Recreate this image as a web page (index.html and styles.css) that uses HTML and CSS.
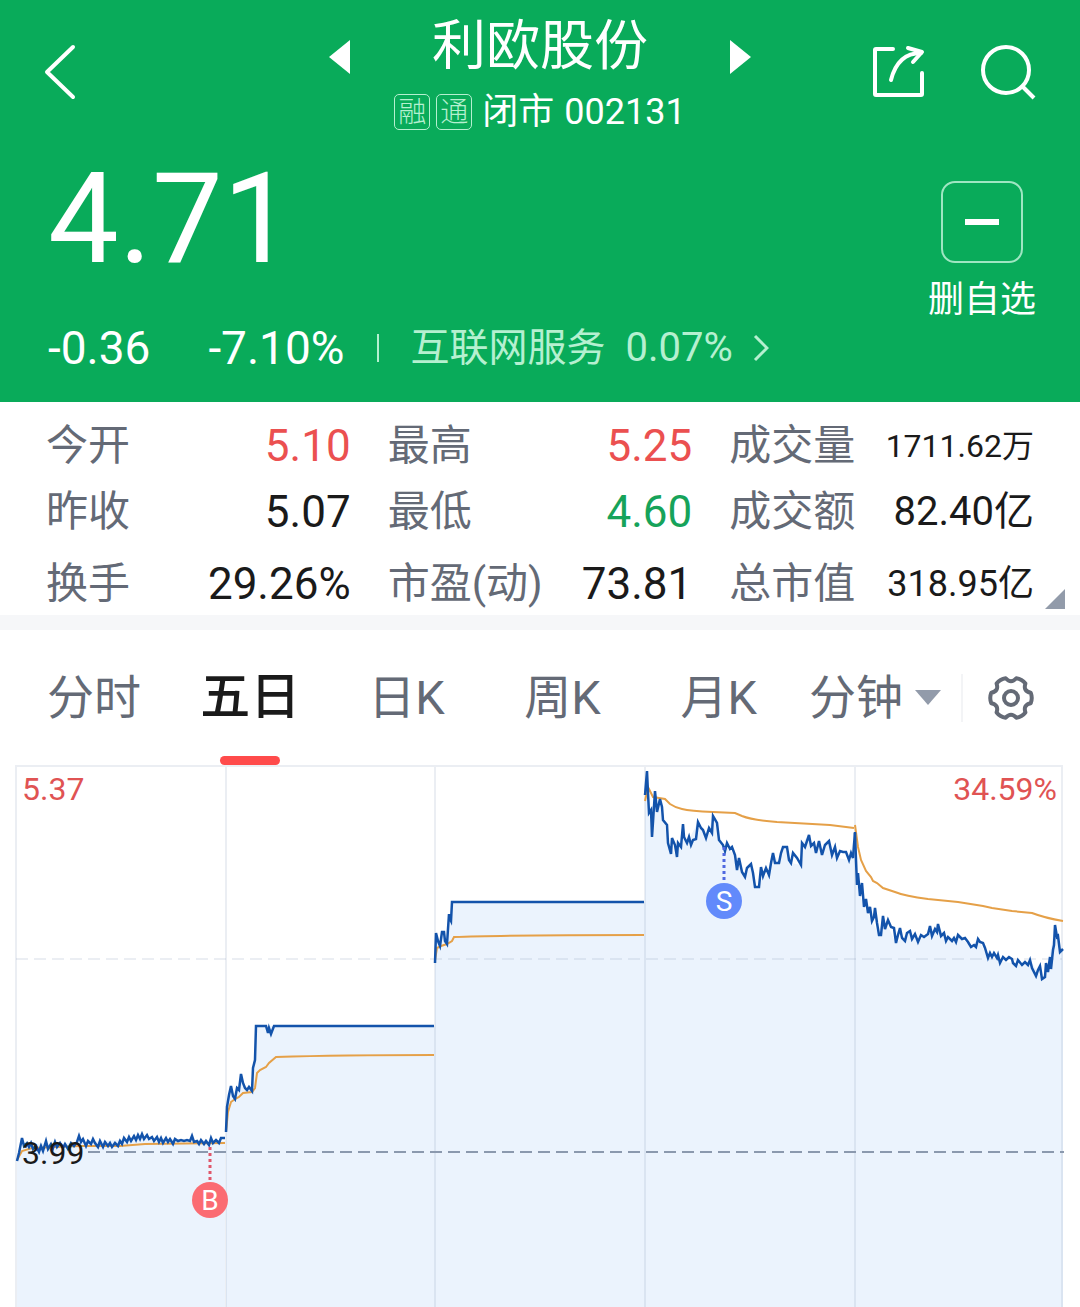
FILE: index.html
```html
<!DOCTYPE html>
<html lang="zh-CN">
<head>
  <meta charset="UTF-8">
  <meta name="viewport" content="width=device-width, initial-scale=1.0">
  <title>利欧股份 002131</title>
  <link rel="stylesheet" href="styles.css">
</head>
<body>
  <!-- Green header: title bar, price, change -->
  <header class="header">
    <div class="title-bar">
      <button class="icon-button" aria-label="返回">
        <svg width="56" height="56" viewBox="0 0 56 56" fill="none" stroke="#fff" stroke-width="4" stroke-linecap="round" stroke-linejoin="round">
          <path d="M29 3L3 28L29 53"/>
        </svg>
      </button>
      <div class="stock-switch">
        <button class="arrow-button" aria-label="上一只">
          <svg width="21" height="34" viewBox="0 0 21 34"><path d="M21 0V34L0 17Z" fill="#fff"/></svg>
        </button>
        <div class="stock">
          <h1 class="stock-name">利欧股份</h1>
          <div class="stock-meta">
            <span class="badge">融</span>
            <span class="badge">通</span>
            <span class="stock-state">闭市</span>
            <span class="stock-code">002131</span>
          </div>
        </div>
        <button class="arrow-button" aria-label="下一只">
          <svg width="21" height="34" viewBox="0 0 21 34"><path d="M0 0V34L21 17Z" fill="#fff"/></svg>
        </button>
      </div>
      <div class="actions">
        <button class="icon-button" aria-label="分享">
          <svg width="56" height="56" viewBox="0 0 56 56" fill="none" stroke="#fff" stroke-width="4" stroke-linecap="round" stroke-linejoin="round">
            <path d="M23 5H6Q5 5 5 6V50Q5 51 6 51H51Q52 51 52 50V29"/>
            <path d="M21 36C25 20 34 9 51 9"/>
            <path d="M38 4L52 8L43 18"/>
          </svg>
        </button>
        <button class="icon-button" aria-label="搜索">
          <svg width="56" height="56" viewBox="0 0 56 56" fill="none" stroke="#fff" stroke-width="4">
            <circle cx="26" cy="26" r="23"/>
            <path d="M42 42L54 54"/>
          </svg>
        </button>
      </div>
    </div>

    <div class="price-row">
      <div class="price">4.71</div>
      <button class="watch-button">
        <span class="watch-icon">
          <svg width="34" height="6" viewBox="0 0 34 6"><path d="M0 3H34" stroke="#fff" stroke-width="6"/></svg>
        </span>
        删自选
      </button>
    </div>

    <div class="change-row">
      <span class="change">-0.36</span>
      <span class="change">-7.10%</span>
      <a class="sector" href="#sector">
        <span class="sector-name">互联网服务</span>
        <span class="sector-change">0.07%</span>
        <svg width="16" height="28" viewBox="0 0 16 28" fill="none" stroke="#b5f0d0" stroke-width="3"><path d="M2 2L14 14L2 26"/></svg>
      </a>
    </div>
  </header>

  <!-- Key figures -->
  <section class="quote">
    <dl class="stats">
      <div class="stat"><dt>今开</dt><dd class="up">5.10</dd></div>
      <div class="stat"><dt>最高</dt><dd class="up">5.25</dd></div>
      <div class="stat"><dt>成交量</dt><dd class="small">1711.62万</dd></div>
      <div class="stat"><dt>昨收</dt><dd>5.07</dd></div>
      <div class="stat"><dt>最低</dt><dd class="down">4.60</dd></div>
      <div class="stat"><dt>成交额</dt><dd class="large">82.40亿</dd></div>
      <div class="stat last"><dt>换手</dt><dd>29.26%</dd></div>
      <div class="stat last"><dt>市盈(动)</dt><dd>73.81</dd></div>
      <div class="stat last"><dt>总市值</dt><dd class="medium">318.95亿</dd></div>
    </dl>
    <button class="expand-button" aria-label="展开">
      <svg width="20" height="20" viewBox="0 0 20 20"><path d="M20 0V20H0Z" fill="#929baa"/></svg>
    </button>
  </section>

  <!-- Chart period tabs -->
  <nav class="tabs">
    <button class="tab">分时</button>
    <button class="tab active">五日</button>
    <button class="tab">日K</button>
    <button class="tab">周K</button>
    <button class="tab">月K</button>
    <div class="tab">
      <select class="minute-select" aria-label="分钟">
        <option>分钟</option>
      </select>
      <svg width="26" height="15" viewBox="0 0 26 15"><path d="M0 0H26L13 15Z" fill="#929baa"/></svg>
    </div>
    <button class="settings-button" aria-label="设置">
      <svg width="48" height="48" viewBox="0 0 48 48" fill="none" stroke="#646a76" stroke-width="4" stroke-linejoin="round">
        <path d="M18.7 4.3Q24 10.3 29.3 4.3Q34.9 5.1 38.4 9.6Q35.9 17.1 43.7 18.7Q45.8 24 43.7 29.3Q35.9 30.9 38.4 38.4Q34.9 42.9 29.3 43.7Q24 37.7 18.7 43.7Q13.1 42.9 9.6 38.4Q12.1 30.9 4.3 29.3Q2.2 24 4.3 18.7Q12.1 17.1 9.6 9.6Q13.1 5.1 18.7 4.3Z"/>
        <circle cx="24" cy="24" r="7"/>
      </svg>
    </button>
  </nav>

  <!-- Five day chart -->
  <svg class="chart" viewBox="0 765 1080 542" role="img" aria-label="五日走势">
    <defs>
      <path id="day1" d="M17 1161L19 1153L22 1138L24 1146L27 1143L29 1147L31 1143L33 1149L36 1146L39 1152L41 1146L43 1151L46 1141L48 1149L51 1144L53 1148L55 1142L57 1147L60 1143L63 1148L65 1144L68 1149L71 1143L74 1146L77 1142L79 1136L81 1142L83 1139L86 1146L88 1141L91 1144L93 1139L95 1143L98 1147L100 1141L103 1147L105 1142L108 1146L110 1143L112 1147L115 1143L118 1146L120 1141L122 1144L124 1138L127 1142L129 1137L131 1141L134 1136L136 1140L138 1135L140 1139L142 1134L144 1139L147 1135L149 1139L152 1137L154 1141L157 1137L159 1142L161 1138L163 1143L166 1138L168 1142L170 1139L173 1144L175 1139L178 1141L181 1140L184 1141L187 1140L190 1141L192 1136L194 1142L197 1141L199 1144L201 1140L204 1144L206 1141L209 1145L211 1138L213 1143L216 1140L219 1143L221 1138L225 1138"/>
      <path id="day2" d="M226 1132L227 1107L229 1095L231 1086L233 1096L235 1099L237 1088L239 1090L241 1074L243 1083L245 1088L247 1090L249 1087L252 1091L253 1068L255 1060L256 1026H266L268 1033L269 1028L271 1034L274 1026H434"/>
      <path id="day3" d="M435 963L436 933L438 941L440 946L442 932H444L445 941L447 944L449 914L450 919L451 921L452 902H644"/>
      <path id="day4" d="M645 795L647 771L648 793L649 813L651 810L652 837L653 822L655 791L657 812L660 799L662 807L663 820L667 825L668 843L671 854L672 838L675 845L677 857L678 843L681 847L683 824L684 837L687 843L689 837L691 845L693 840L696 839L698 822L701 828L703 830L706 838L709 828L712 833L713 816L717 823L719 840L723 845L725 851L727 843L730 849L732 847L735 855L737 870L739 858L742 872L745 877L747 868L751 864L753 873L755 887H759L761 867L763 876L766 868L769 875L771 863L773 853L775 863L779 863L781 853L783 847L787 847L789 860L791 863L793 853L797 858L801 865L802 843L805 847L809 835L811 846L814 843L816 853L819 841L822 855L825 845L829 841L832 855L835 847L837 858L840 851L843 852L846 852L849 860L851 853L853 858L855 832"/>
      <path id="day5" d="M855 833L856 860L857 885L858 873L860 896L862 883L864 907L866 899L868 913L870 907L872 921L874 917L875 908L877 923L879 935H881L883 916L885 929L888 920L891 927L894 928L896 943L898 935L900 928L902 938L905 941L907 933L910 931L912 939L915 934L918 942L921 935L924 937L928 934L930 926L932 936L935 929L937 932L938 924L941 936L944 933L946 941L948 937L952 941L954 938L956 942L958 935L962 939L965 938L968 942L971 947L974 945L976 947L978 939L980 942L983 943L985 948L988 958L990 953L992 957L994 953L997 958L998 955L1000 963L1003 957L1006 960L1009 957L1012 959L1013 963L1016 966L1018 960L1022 965L1025 962L1028 965L1030 960L1032 968L1036 976L1038 970L1040 966L1042 979L1045 977L1046 963L1048 972L1050 957L1051 969L1053 950L1054 945L1055 925L1057 937L1058 936L1060 952L1063 949"/>
    </defs>

    <g class="area">
      <path d="M17 1161L22 1144L80 1143L140 1138L225 1141V1307H17Z"/>
      <path d="M226 1307V1132L227 1107L229 1095L231 1086L235 1099L241 1074L245 1088L252 1091L255 1060L256 1026H435V1307Z"/>
      <path d="M435 1307V963L436 933L440 946L442 932H444L447 944L449 914L451 921L452 902H645V1307Z"/>
      <path d="M645 1307V795L647 771L649 813L652 837L655 791L662 807L668 843L677 857L683 824L687 843L698 822L706 838L713 816L723 845L735 855L745 877L751 864L755 887H759L763 876L769 875L773 853L779 863L783 847L787 847L791 863L801 865L802 843L809 835L816 853L819 841L822 855L829 841L837 858L849 860L855 832V1307Z"/>
      <path d="M855 1307V833L857 885L864 907L872 921L879 935L883 916L896 943L910 931L918 942L938 924L946 941L958 935L971 947L978 939L988 958L1000 961L1022 965L1030 960L1042 979L1048 965L1055 925L1060 952L1063 949V1307Z"/>
    </g>

    <g class="grid">
      <path d="M15 766H1063M16 766V1307M226 766V1307M435 766V1307M645 766V1307M855 766V1307M1062 766V1307"/>
      <path d="M16 959H1062" stroke-dasharray="12 6"/>
    </g>
    <path class="base-line" d="M88 1152H1064"/>

    <g class="average">
      <path d="M17 1160L22 1151L32 1148L80 1146L120 1146L145 1144L225 1143"/>
      <path d="M226 1132L228 1112L231 1102L235 1099L239 1097L243 1093L252 1092L255 1088L257 1073L260 1070L266 1067L269 1063L276 1057Q340 1055 434 1055"/>
      <path d="M435 960L437 948L441 946L447 944L452 941L454 937Q500 935 644 935"/>
      <path d="M645 801L648 787L653 797L665 799L670 804Q676 808 682 809Q690 811 713 812L735 813L742 816Q752 820 777 822L830 825L854 828"/>
      <path d="M855 825L858 847L861 860L866 871L871 877L873 881L877 883L883 888L895 892Q905 896 928 899L958 902L983 906L992 908L1012 911L1032 913Q1045 918 1063 921"/>
    </g>
    <g class="price-line">
      <use href="#day1"/>
      <use href="#day2"/>
      <use href="#day3"/>
      <use href="#day4"/>
      <use href="#day5"/>
    </g>

    <!-- Buy and sell marks -->
    <path class="mark-line buy" d="M210 1147V1182"/>
    <circle class="buy" cx="210" cy="1200" r="18"/>
    <text class="mark" x="210" y="1210">B</text>
    <path class="mark-line sell" d="M724 847V882"/>
    <circle class="sell" cx="724" cy="901" r="18"/>
    <text class="mark" x="724" y="911">S</text>

    <text class="scale up" x="22" y="800">5.37</text>
    <text class="scale up end" x="1057" y="800">34.59%</text>
    <text class="scale" x="22" y="1164">3.99</text>
  </svg>
</body>
</html>
```

FILE: styles.css
```css
* {
  margin: 0;
  padding: 0;
  box-sizing: border-box;
}
body {
  background-color: #fff;
  color: #1a1a1a;
  font-family: Roboto, "Noto Sans CJK SC", sans-serif;
}
button,
select {
  background: none;
  border: none;
  color: inherit;
  font: inherit;
  cursor: pointer;
}
svg {
  display: block;
}
/* Header */
.header {
  background-color: #09ab5a;
  color: #fff;
  padding: 0 44px 33px;
}
.title-bar {
  display: grid;
  grid-template-columns: 1fr auto 1fr;
  align-items: center;
}
.icon-button {
  justify-self: start;
}
.stock-switch {
  display: flex;
  align-items: flex-start;
  gap: 44px;
}
.arrow-button {
  padding-top: 40px;
}
.stock {
  text-align: center;
}
.stock-name {
  padding-top: 14px;
  font-size: 54px;
  font-weight: 400;
  line-height: 66px;
}
.stock-meta {
  display: flex;
  align-items: center;
  justify-content: center;
  gap: 6px;
  font-size: 36px;
  line-height: 64px;
}
.badge {
  width: 36px;
  height: 36px;
  border: 1px solid #b5f0d0;
  border-radius: 5px;
  color: #b5f0d0;
  font-size: 28px;
  font-weight: 300;
  line-height: 36px;
}
.stock-state {
  margin-left: 4px;
}
.stock-code {
  margin-left: 4px;
}
.actions {
  display: flex;
  justify-content: flex-end;
  gap: 54px;
}
.price-row {
  display: flex;
  justify-content: space-between;
  align-items: flex-start;
  padding-left: 4px;
}
.price {
  font-size: 126px;
  line-height: 150px;
}
.watch-button {
  display: flex;
  flex-direction: column;
  align-items: center;
  padding-top: 37px;
  font-size: 36px;
  line-height: 54px;
}
.watch-icon {
  display: flex;
  align-items: center;
  justify-content: center;
  width: 82px;
  height: 82px;
  margin-bottom: 10px;
  border: 2px solid #9fe6c2;
  border-radius: 14px;
}
.change-row {
  display: flex;
  align-items: center;
  padding-left: 4px;
  line-height: 42px;
}
.change {
  margin-right: 58px;
  font-size: 46px;
}
.sector {
  display: flex;
  align-items: center;
  margin-left: -26px;
  color: #b5f0d0;
  text-decoration: none;
}
.sector::before {
  content: "";
  width: 2px;
  height: 28px;
  margin-right: 32px;
  background-color: #b5f0d0;
}
.sector-name {
  font-size: 39px;
}
.sector-change {
  margin: 0 20px;
  font-size: 40px;
}
/* Key figures */
.quote {
  position: relative;
  padding: 14px 46px 1px;
  border-bottom: 15px solid #f6f7f9;
}
.stats {
  display: grid;
  grid-template-columns: repeat(3, 1fr);
  gap: 6px 37px;
}
.stat {
  display: flex;
  justify-content: space-between;
  font-size: 42px;
  line-height: 60px;
}
.stat.last {
  padding-top: 6px;
}
.stat dt {
  color: #646a76;
}
.stat dd {
  font-size: 44px;
}
.stat .small {
  font-size: 32px;
}
.stat .medium {
  font-size: 36px;
}
.stat .large {
  font-size: 40px;
}
.stat .up {
  color: #eb5050;
}
.stat .down {
  color: #16a35a;
}
.expand-button {
  position: absolute;
  right: 15px;
  bottom: 6px;
}
/* Tabs */
.tabs {
  display: flex;
  align-items: center;
  padding: 0 22px 0 16px;
}
.tab {
  position: relative;
  display: flex;
  flex: 1 1 0;
  align-items: center;
  justify-content: center;
  gap: 12px;
  color: #646a76;
  font-size: 47px;
  line-height: 135px;
}
.tab.active {
  color: #1a1a1a;
  font-size: 50px;
  font-weight: 500;
}
.tab.active::after {
  content: "";
  position: absolute;
  bottom: 0;
  width: 60px;
  height: 9px;
  border-radius: 5px;
  background-color: #ff4b4b;
}
.minute-select {
  appearance: none;
}
.settings-button {
  display: flex;
  justify-content: center;
  width: 97px;
  margin-left: 8px;
  border-left: 2px solid #f3f4f6;
}
/* Chart */
.chart {
  width: 100%;
  height: auto;
}
.area {
  fill: #ebf3fd;
}
.grid {
  fill: none;
  stroke: #8296b4;
  stroke-opacity: 0.16;
  stroke-width: 2;
}
.base-line {
  stroke: #8b99ae;
  stroke-width: 2;
  stroke-dasharray: 12 6;
}
.average {
  fill: none;
  stroke: #e5a048;
  stroke-width: 2;
}
.price-line {
  fill: none;
  stroke: #1353ab;
  stroke-width: 2.5;
}
.mark-line {
  stroke-width: 3;
  stroke-dasharray: 3 3;
}
.buy {
  fill: #fb6b72;
  stroke: #e0566a;
}
.sell {
  fill: #628afb;
  stroke: #4f68e0;
}
circle.buy,
circle.sell {
  stroke: none;
}
.mark {
  fill: #fff;
  font-size: 28px;
  text-anchor: middle;
}
.scale {
  fill: #1a1a1a;
  font-size: 32px;
}
.scale.up {
  fill: #e05353;
}
.scale.end {
  text-anchor: end;
}
```
